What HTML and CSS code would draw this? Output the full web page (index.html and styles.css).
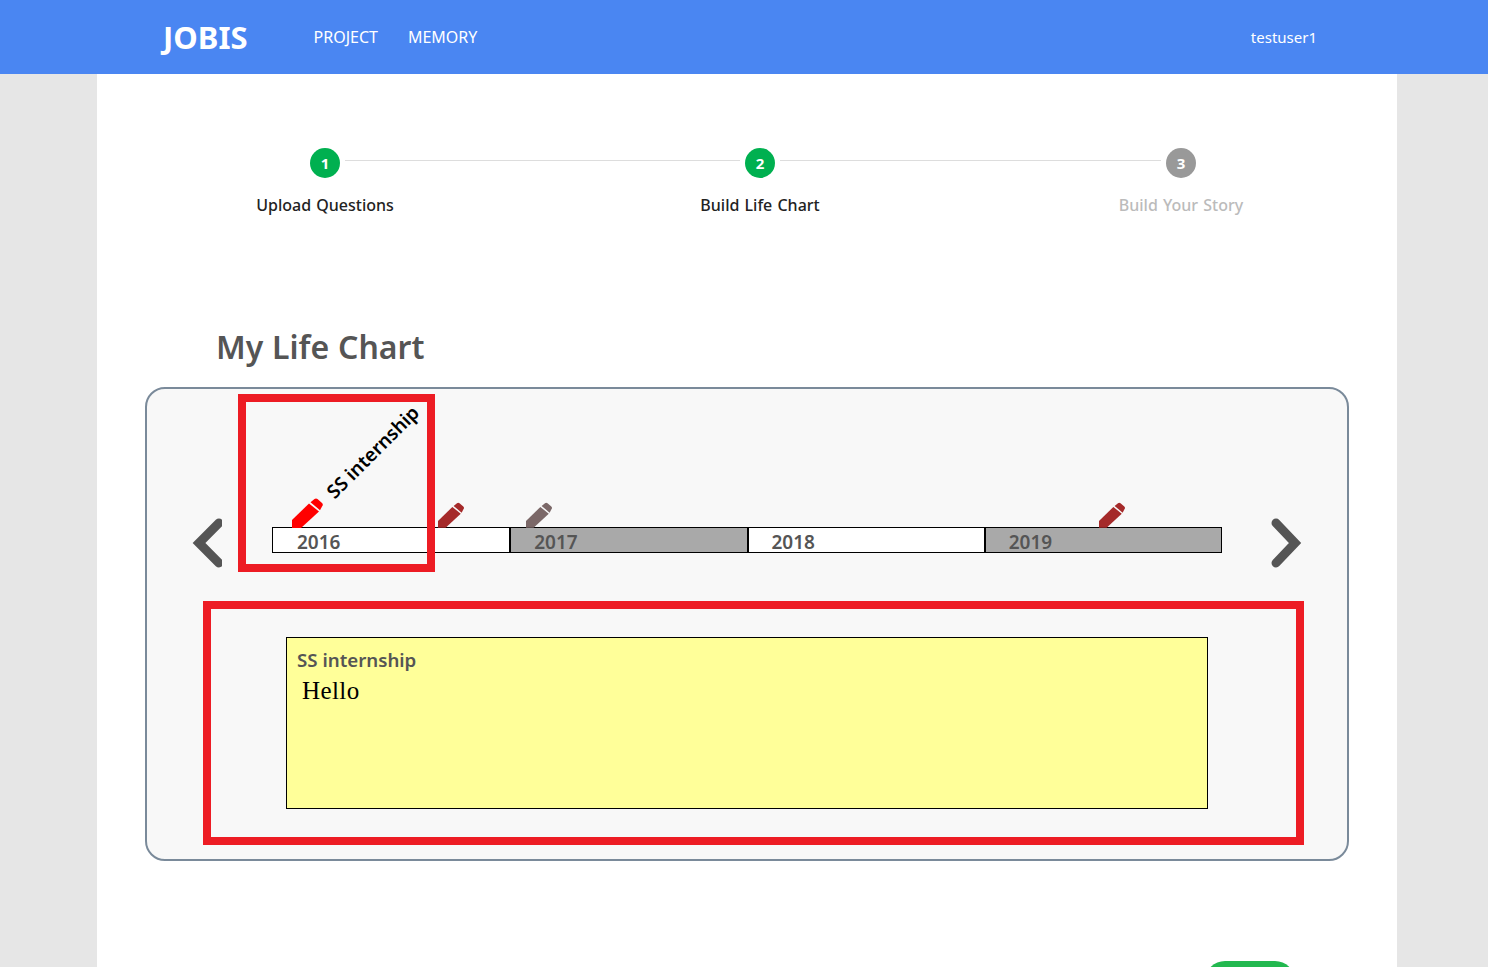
FILE: index.html
```html
<!DOCTYPE html>
<html lang="en">
<head>
    <meta charset="UTF-8">
    <meta name="viewport" content="width=device-width, initial-scale=1.0">
    <title>JOBIS</title>
    <link rel="stylesheet" href="styles.css">
</head>
<body>
    <svg class="defs" width="0" height="0">
        <symbol id="pencil" viewBox="0 0 32 30">
            <path d="M0 30 L0 22 L17 5.5 L27 13.5 L9 30 Z"/>
            <path d="M18.5 4.2 L22.5 1 Q24 0 25.5 1 L30 5 Q31.5 6.5 30.3 8 L28 12.2 Z"/>
        </symbol>
    </svg>

    <header class="topbar">
        <a class="logo">JOBIS</a>
        <nav class="menu">
            <a>PROJECT</a>
            <a>MEMORY</a>
        </nav>
        <span class="user">testuser1</span>
    </header>

    <main class="content">
        <div class="stepper">
            <div class="step done">
                <span class="num">1</span>
                <span class="label">Upload Questions</span>
            </div>
            <div class="line line-first"></div>
            <div class="step done">
                <span class="num">2</span>
                <span class="label">Build Life Chart</span>
            </div>
            <div class="line"></div>
            <div class="step">
                <span class="num">3</span>
                <span class="label">Build Your Story</span>
            </div>
        </div>

        <h1 class="title">My Life Chart</h1>

        <section class="panel">
            <div class="mark mark-event"></div>

            <div class="chart">
                <svg class="arrow" width="32" height="52" viewBox="0 0 32 52">
                    <path d="M29 6 L9 26 L29 46"/>
                </svg>
                <div class="timeline">
                    <span class="event-name">SS internship</span>
                    <svg class="pin pin-red" style="left: 19px"><use href="#pencil"/></svg>
                    <svg class="pin pin-brown small" style="left: 165px"><use href="#pencil"/></svg>
                    <svg class="pin pin-grey small" style="left: 253px"><use href="#pencil"/></svg>
                    <svg class="pin pin-brown small" style="left: 826px"><use href="#pencil"/></svg>
                    <div class="year">2016</div>
                    <div class="year off">2017</div>
                    <div class="year">2018</div>
                    <div class="year off">2019</div>
                </div>
                <svg class="arrow arrow-next" width="32" height="52" viewBox="0 0 32 52">
                    <path d="M6 6 L25 26 L6 46"/>
                </svg>
            </div>

            <div class="detail-wrap">
                <div class="note">
                    <h3>SS internship</h3>
                    <p>Hello</p>
                </div>
            </div>
        </section>

        <div class="actions">
            <button class="next"></button>
        </div>
    </main>
</body>
</html>
```

FILE: styles.css
```css
html, body {
    height: 967px;
    overflow: hidden;
}
body {
    margin: 0;
    font-family: "Noto Sans", "Open Sans", sans-serif;
    color: #555;
    background-color: #e6e6e6;
}
.defs {
    position: absolute;
}
.topbar {
    height: 74px;
    background-color: #4a86f2;
    color: #fff;
    display: flex;
    align-items: center;
    padding: 0 171px 0 163px;
}
.logo {
    font-size: 31px;
    font-weight: 700;
}
.menu {
    display: flex;
    gap: 30px;
    margin-left: 66px;
    font-size: 16px;
}
.user {
    margin-left: auto;
    font-size: 15px;
}
.content {
    width: 1300px;
    height: 893px;
    margin-left: 97px;
    background-color: #fff;
    padding-top: 74px;
    box-sizing: border-box;
    overflow: hidden;
}
.stepper {
    display: flex;
    margin: 0 201px 0 213px;
}
.step {
    width: 30px;
    display: flex;
    flex-direction: column;
    align-items: center;
    color: #bbb;
}
.step.done {
    color: #222;
}
.num {
    width: 30px;
    height: 30px;
    border-radius: 50%;
    background-color: #999;
    color: #fff;
    font-size: 15px;
    font-weight: 700;
    display: flex;
    align-items: center;
    justify-content: center;
}
.done .num {
    background-color: #00b050;
}
.label {
    margin-top: 16px;
    font-size: 16px;
    font-weight: 500;
    word-spacing: 1px;
    white-space: nowrap;
}
.line {
    flex: 1;
    height: 1px;
    margin: 12px 5px 0;
    background-color: #ddd;
}
.line-first {
    flex: 0 0 395px;
}
.title {
    margin: 109px 0 18px 119px;
    font-size: 32px;
    line-height: 44px;
    font-weight: 600;
    word-spacing: 0.5px;
    color: #555;
}
.panel {
    position: relative;
    width: 1204px;
    height: 474px;
    margin-left: 48px;
    box-sizing: border-box;
    border: 2px solid #7a8a9a;
    border-radius: 20px;
    background-color: #f8f8f8;
}
.mark-event {
    position: absolute;
    left: 91px;
    top: 5px;
    width: 197px;
    height: 178px;
    box-sizing: border-box;
    border: 8px solid #ed1c24;
    z-index: 2;
}
.chart {
    display: flex;
    align-items: center;
    gap: 33px;
    padding: 122px 0 0 43px;
}
.arrow {
    flex: none;
    margin-top: 6px;
}
.arrow path {
    fill: none;
    stroke: #555;
    stroke-width: 9;
    stroke-linecap: round;
}
.arrow-next {
    margin-left: 15px;
}
.timeline {
    position: relative;
    display: flex;
    width: 950px;
    height: 26px;
    box-sizing: border-box;
    border: 1px solid #000;
    margin-left: 17px;
}
.year {
    flex: 1;
    padding: 4px 0 0 23px;
    font-size: 19px;
    line-height: 20px;
    font-weight: 600;
    background-color: #fff;
    border-left: 2px solid #000;
}
.year:first-of-type {
    padding-left: 24px;
    border-left: 0;
}
.year.off {
    background-color: #a9a9a9;
}
.pin {
    position: absolute;
    bottom: 24px;
    width: 32px;
    height: 30px;
}
.pin.small {
    width: 27px;
    height: 26px;
}
.pin-red {
    fill: #f00;
}
.pin-brown {
    fill: #a52a2a;
}
.pin-grey {
    fill: #7b6868;
}
.event-name {
    position: absolute;
    left: 66px;
    bottom: 48px;
    font-size: 19px;
    font-weight: 600;
    color: #000;
    white-space: nowrap;
    transform: rotate(-45deg);
    transform-origin: left bottom;
}
.detail-wrap {
    margin: 32px 0 0 56px;
    width: 1101px;
    height: 244px;
    box-sizing: border-box;
    border: 8px solid #ed1c24;
    padding: 28px 0 0 75px;
}
.note {
    width: 922px;
    height: 172px;
    box-sizing: border-box;
    border: 1px solid #000;
    background-color: #ff9;
    padding: 8px 10px;
}
.note h3 {
    margin: 0;
    font-size: 18.7px;
    line-height: 28px;
    font-weight: 600;
    color: #555;
}
.note p {
    margin: 1px 0 0 5px;
    font-family: "Liberation Serif", serif;
    font-size: 25px;
    line-height: 32px;
    letter-spacing: 0.4px;
    color: #000;
}
.actions {
    display: flex;
    justify-content: flex-end;
    padding: 100px 102px 0 0;
}
.next {
    width: 90px;
    height: 40px;
    border: 0;
    border-radius: 20px;
    background-color: #22b84f;
}
```
